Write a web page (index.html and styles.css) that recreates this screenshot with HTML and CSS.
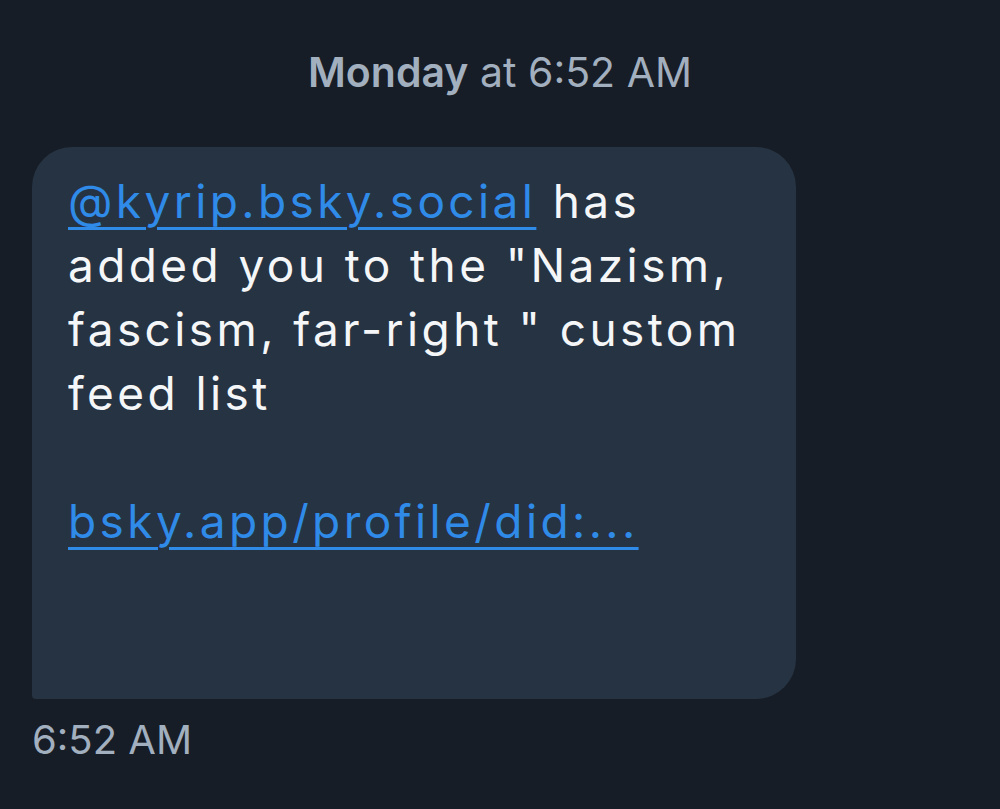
FILE: index.html
```html
<!DOCTYPE html>
<html>
<head>
<meta charset="utf-8">
<link rel="stylesheet" href="styles.css">
</head>
<body>
<div class="chat">
  <div class="day"><b>Monday</b> at 6:52 AM</div>
  <div class="bubble">
    <p class="msg"><a class="link" href="#">@kyrip.bsky.social</a> has added you to the "Nazism, fascism, far-right " custom feed list</p>
    <p class="msg gap"><a class="link" href="#">bsky.app/profile/did:...</a></p>
  </div>
  <div class="time">6:52 AM</div>
</div>
</body>
</html>
```
FILE: styles.css
```css
html, body {
  margin: 0;
  padding: 0;
  background: #171d26;
  height: 100%;
}
body {
  font-family: Inter, "Noto Sans", sans-serif;
  overflow: hidden;
}
.chat {
  display: flex;
  flex-direction: column;
  align-items: flex-start;
  padding: 44px 0 0 32px;
}
.day {
  align-self: stretch;
  margin-left: -32px;
  text-align: center;
  color: #a2afbf;
  font-size: 41px;
  line-height: 56px;
}
.day b {
  font-weight: 600;
}
.bubble {
  margin-top: 47px;
  width: 764px;
  box-sizing: border-box;
  background: #263342;
  border-radius: 40px 40px 40px 4px;
  padding: 22px 20px 146px 36px;
  color: #f4f6f8;
  font-size: 46px;
  line-height: 64px;
  letter-spacing: 3.4px;
}
.msg {
  margin: 0;
}
.msg.gap {
  margin-top: 64px;
}
.link {
  color: #2f8ae8;
  text-decoration: underline;
  text-decoration-thickness: 3px;
  text-underline-offset: 9px;
}
.time {
  margin-top: 16px;
  color: #a2afbf;
  font-size: 40px;
  line-height: 50px;
}
```
